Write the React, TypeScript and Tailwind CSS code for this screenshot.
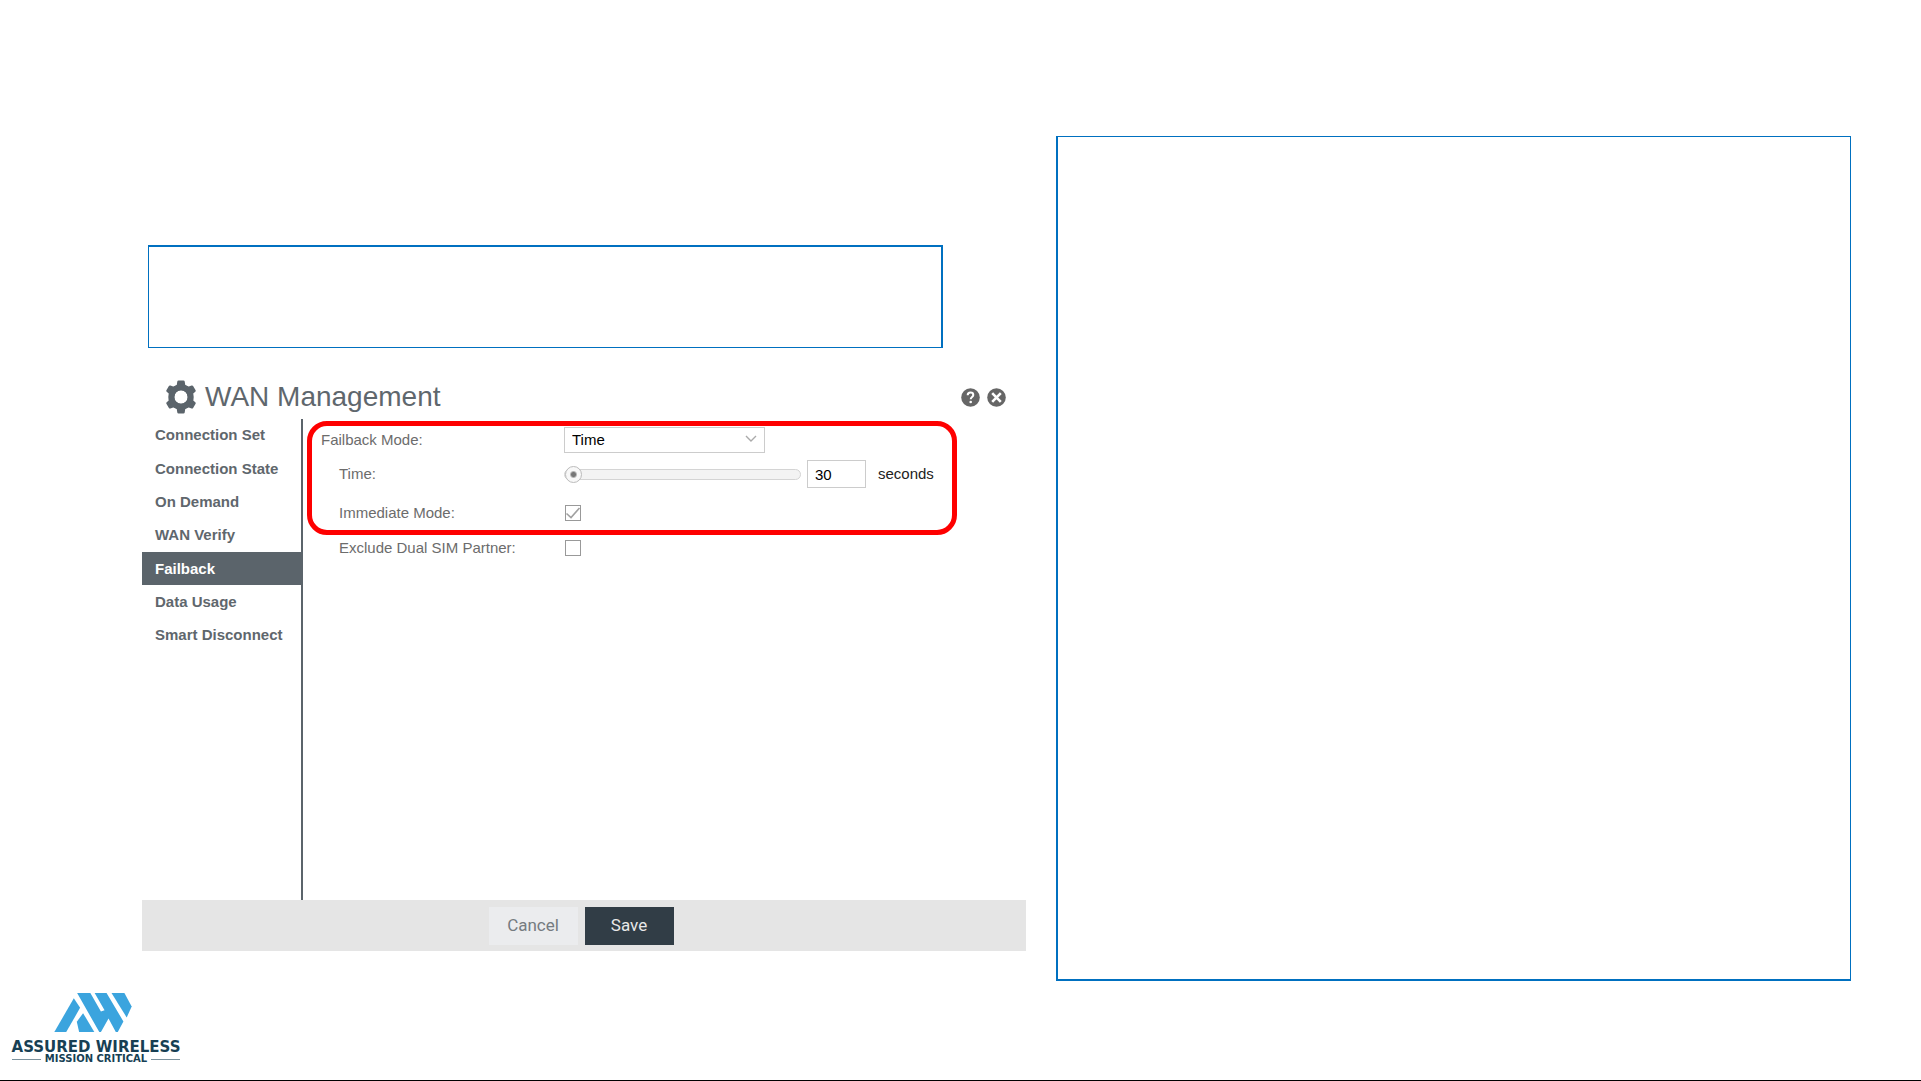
import { useState } from "react";

const sections = [
  "Connection Set",
  "Connection State",
  "On Demand",
  "WAN Verify",
  "Failback",
  "Data Usage",
  "Smart Disconnect",
];

function GearIcon() {
  return (
    <svg viewBox="0 0 32 34" className="h-[34px] w-8" fill="#5b646b" aria-hidden="true">
      <path
        fillRule="evenodd"
        d="M12.300 1.500Q12.500.5 13.500.5h5q1 0 1.200 1l.6 3.700 2.800 1.600 3.500-1.300q1-.4 1.500.5l2.500 4.300q.5.900-.3 1.500l-2.900 2.400q.2 2.800 0 5.600l2.900 2.400q.8.600.3 1.500l-2.500 4.300q-.5.900-1.500.5l-3.500-1.300-2.800 1.600-.6 3.700q-.2 1-1.200 1h-5q-1 0-1.200-1l-.6-3.700-2.800-1.600-3.500 1.300q-1 .4-1.500-.5L1.400 23.700q-.5-.9.300-1.500l2.900-2.400q-.2-2.800 0-5.600l-2.900-2.400q-.8-.6-.3-1.500L3.900 6q.5-.9 1.500-.5l3.500 1.300 2.800-1.600zM16 10.300a6.700 6.700 0 1 0 0 13.400a6.700 6.700 0 1 0 0-13.400z"
      />
      <circle cx="16" cy="17" r="9.700" fill="none" stroke="#5b646b" strokeWidth="6" />
    </svg>
  );
}

function HelpIcon() {
  return (
    <svg viewBox="0 0 19 19" className="size-[19px]" aria-hidden="true">
      <circle cx="9.5" cy="9.5" r="9.3" fill="#666" />
      <path
        d="M6.700 7.300c0-1.700 1.200-2.700 2.800-2.700s2.800 1 2.800 2.400c0 2-2.600 2-2.600 4.200"
        fill="none"
        stroke="#fff"
        strokeWidth="2"
      />
      <circle cx="9.700" cy="14" r="1.300" fill="#fff" />
    </svg>
  );
}

function CloseIcon() {
  return (
    <svg viewBox="0 0 19 19" className="size-[19px]" aria-hidden="true">
      <circle cx="9.5" cy="9.5" r="9.3" fill="#666" />
      <path d="M5.200 5.200l8.600 8.600M13.800 5.200l-8.600 8.600" stroke="#fff" strokeWidth="2.600" />
    </svg>
  );
}

function Logo() {
  return (
    <div className="flex w-[168px] flex-col items-center whitespace-nowrap font-['DejaVu_Sans',sans-serif] font-bold text-[#173f54]">
      <svg viewBox="163 69 234 118" className="mr-1.5 h-[39px] w-[78px]" fill="#3ba4de" aria-hidden="true">
        <path d="M222 85L241 114L199 187H163z" />
        <path d="M250 130L284 187H238L231 156z" />
        <path d="M232 69H272L304 125L315 121L285 69H321L372 155L355 187H349L327 146L304 187H299z" />
        <path d="M336 69H375L397 110L382 143z" />
      </svg>
      <div className="mt-[7px] text-[15px] leading-4">ASSURED WIRELESS</div>
      <div className="flex w-full items-center gap-1">
        <span className="h-px flex-1 bg-[#7c929d]" />
        <span className="text-[10px] leading-2">MISSION CRITICAL</span>
        <span className="h-px flex-1 bg-[#7c929d]" />
      </div>
    </div>
  );
}

function Checkbox({ id, defaultChecked }: { id: string; defaultChecked?: boolean }) {
  const [checked, setChecked] = useState(!!defaultChecked);

  return (
    <span className="relative ml-px flex size-4">
      <input
        id={id}
        type="checkbox"
        checked={checked}
        onChange={(e) => setChecked(e.target.checked)}
        className="size-4 appearance-none border border-[#999] bg-white"
      />
      {checked && (
        <svg
          viewBox="0 0 16 16"
          className="pointer-events-none absolute inset-0 size-4"
          aria-hidden="true"
        >
          <path d="M1.500 8.500l4.500 4L14.500 3" fill="none" stroke="#a0a0a0" strokeWidth="1.600" />
        </svg>
      )}
    </span>
  );
}

function FailbackForm() {
  const [seconds, setSeconds] = useState("30");

  return (
    <form id="failback" className="flex-1 pt-[3px] text-[15px] text-[#6c6c6c]">
      <div className="relative">
        <div className="flex h-9 items-center pl-[18px]">
          <label htmlFor="mode" className="w-[243px]">
            Failback Mode:
          </label>
          <span className="relative">
            <select
              id="mode"
              className="block h-[26px] w-[201px] appearance-none border border-[#ccc] bg-white px-[7px] text-black"
            >
              <option>Time</option>
            </select>
            <svg
              viewBox="0 0 12 8"
              className="pointer-events-none absolute top-2 right-2 h-2 w-3"
              aria-hidden="true"
            >
              <path d="M1 1l5 5 5-5" fill="none" stroke="#aaa" strokeWidth="1.400" />
            </svg>
          </span>
        </div>

        <div className="flex h-8 items-center pl-9">
          <label htmlFor="time" className="w-[225px]">
            Time:
          </label>
          <input
            type="range"
            aria-label="Time slider"
            min={30}
            max={600}
            value={seconds}
            onChange={(e) => setSeconds(e.target.value)}
            className="h-[18px] w-[237px] appearance-none bg-transparent [&::-webkit-slider-runnable-track]:h-[11px] [&::-webkit-slider-runnable-track]:rounded-full [&::-webkit-slider-runnable-track]:border [&::-webkit-slider-runnable-track]:border-[#d4d4d4] [&::-webkit-slider-runnable-track]:bg-[#f3f3f3] [&::-webkit-slider-thumb]:-mt-1 [&::-webkit-slider-thumb]:size-[17px] [&::-webkit-slider-thumb]:appearance-none [&::-webkit-slider-thumb]:rounded-full [&::-webkit-slider-thumb]:border [&::-webkit-slider-thumb]:border-[#bbb] [&::-webkit-slider-thumb]:bg-[radial-gradient(circle,#777_0,#777_2px,#f8f8f8_4px)]"
          />
          <input
            id="time"
            type="text"
            value={seconds}
            onChange={(e) => setSeconds(e.target.value)}
            className="ml-1.5 h-7 w-[59px] border border-[#ccc] px-[7px] text-black"
          />
          <span className="ml-3 text-[#222]">seconds</span>
        </div>

        <div className="flex h-[46px] items-center pl-9">
          <label htmlFor="immediate" className="w-[225px]">
            Immediate Mode:
          </label>
          <Checkbox id="immediate" defaultChecked />
        </div>

        {/* highlight drawn over the failback settings */}
        <div className="pointer-events-none absolute -top-px left-1 h-[114px] w-[650px] rounded-[20px] border-[5px] border-[#fe0000]" />
      </div>

      <div className="flex h-6 items-center pl-9">
        <label htmlFor="exclude" className="w-[225px]">
          Exclude Dual SIM Partner:
        </label>
        <Checkbox id="exclude" />
      </div>
    </form>
  );
}

function WanDialog() {
  const [active, setActive] = useState("Failback");

  return (
    <section className="mt-[27px]">
      <header className="flex h-11 items-center pr-5 pl-[23px]">
        <GearIcon />
        <h1 className="ml-2 flex-1 text-[28px] leading-11 text-[#5f676d]">WAN Management</h1>
        <div className="flex gap-[7px]">
          <button type="button" aria-label="Help">
            <HelpIcon />
          </button>
          <button type="button" aria-label="Close">
            <CloseIcon />
          </button>
        </div>
      </header>

      <div className="flex min-h-[481px]">
        <div className="w-[161px] border-r-2 border-[#5b646b]">
          <nav className="grid h-[233px] grid-rows-7">
            {sections.map((section) => (
              <button
                key={section}
                type="button"
                onClick={() => setActive(section)}
                className={
                  section === active
                    ? "bg-[#5b646b] pl-[13px] text-left text-[15px] font-bold whitespace-nowrap text-white"
                    : "pl-[13px] text-left text-[15px] font-bold whitespace-nowrap text-[#5f676d]"
                }
              >
                {section}
              </button>
            ))}
          </nav>
        </div>
        <FailbackForm />
      </div>

      <footer className="flex h-[51px] items-center justify-center gap-[7px] bg-[#e5e5e5] pr-1.5 font-[Roboto,sans-serif] text-[17px]">
        <button type="button" className="h-[38px] w-[89px] bg-[#ebecee] text-[#757b80]">
          Cancel
        </button>
        <button type="submit" form="failback" className="h-[38px] w-[89px] bg-[#313d46] text-[#e8e8e8]">
          Save
        </button>
      </footer>
    </section>
  );
}

export default function App() {
  return (
    <main className="flex min-h-screen flex-col border-b border-black bg-white font-['Liberation_Sans',Arial,sans-serif]">
      <div className="grid grid-cols-[884fr_795fr] gap-[30px] pt-[136px] pr-[70px] pl-[142px]">
        <div className="pt-[109px]">
          <div className="mr-[83px] ml-1.5 h-[103px] border border-t-2 border-r-2 border-[#0070c0]" />
          <WanDialog />
        </div>
        <div className="min-h-[845px] border border-b-2 border-l-2 border-[#0070c0]" />
      </div>
      <div className="pt-3 pl-3">
        <Logo />
      </div>
    </main>
  );
}
